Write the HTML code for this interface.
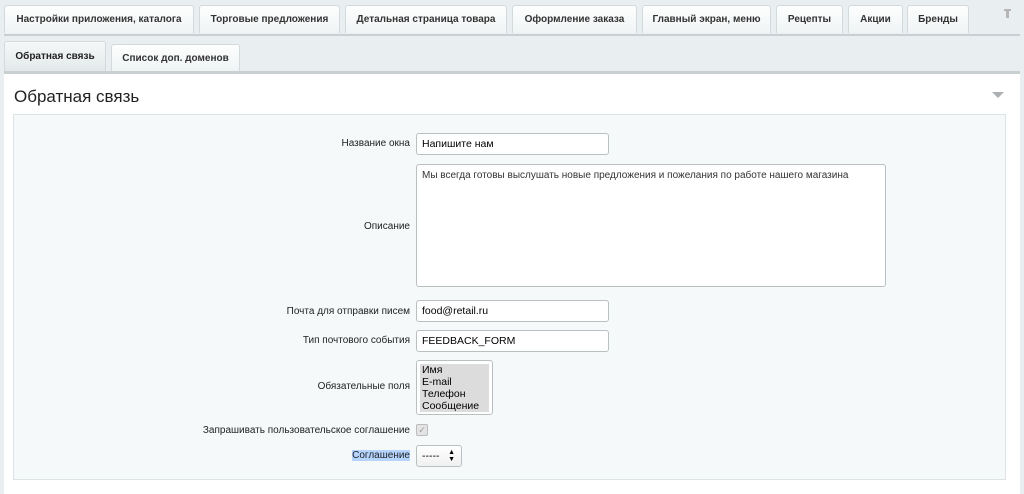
<!DOCTYPE html>
<html><head><meta charset="utf-8"><style>
body{margin:0;width:1024px;height:491px;background:#e9eef0;font-family:"Liberation Sans",sans-serif;position:relative;overflow:hidden;font-size:10px;color:#000}
.a{position:absolute}
.tab{position:absolute;top:5px;height:28px;border:1px solid #d3dadc;border-bottom:none;border-radius:3px 3px 0 0;background:linear-gradient(#fdfefe,#f0f4f5);font-weight:bold;font-size:10px;color:#333;text-align:center;line-height:28px;box-sizing:border-box;white-space:nowrap}
.lbl{position:absolute;right:614px;font-size:10px;color:#222;text-align:right;white-space:nowrap}
.inp{position:absolute;left:416px;background:#fff;border:1px solid #b9c0c2;border-radius:3px;box-sizing:border-box;font-size:10.5px;padding-left:5px;color:#000}
</style></head><body>
<div class="tab" style="left:4px;width:190px">Настройки приложения, каталога</div>
<div class="tab" style="left:199px;width:141px">Торговые предложения</div>
<div class="tab" style="left:345px;width:162px">Детальная страница товара</div>
<div class="tab" style="left:512px;width:125px">Оформление заказа</div>
<div class="tab" style="left:642px;width:129px">Главный экран, меню</div>
<div class="tab" style="left:776px;width:67px">Рецепты</div>
<div class="tab" style="left:848px;width:55px">Акции</div>
<div class="tab" style="left:907px;width:62px">Бренды</div>
<div class="a" style="left:1006px;top:9px;width:3px;height:9px;background:#b5b5b5"></div>
<div class="a" style="left:1004px;top:9px;width:7px;height:2px;background:#b5b5b5"></div>
<div class="a" style="left:4px;top:34px;width:1016px;height:2px;background:#c8d0d3"></div>
<div class="tab" style="left:4px;top:41px;width:102px;height:30px;line-height:30px;background:linear-gradient(#f6f8f8,#e3e9ea);color:#222">Обратная связь</div>
<div class="tab" style="left:111px;top:44px;width:129px;height:27px;line-height:27px">Список доп. доменов</div>
<div class="a" style="left:4px;top:71px;width:1016px;height:420px;background:#fff;border-top:3px solid #c9d0d2"></div>
<div class="a" style="left:14px;top:87px;font-size:17px;color:#222">Обратная связь</div>
<div class="a" style="left:992px;top:92px;width:0;height:0;border-left:6px solid transparent;border-right:6px solid transparent;border-top:6px solid #aab0b3"></div>
<div class="a" style="left:13px;top:114px;width:993px;height:366px;background:#f5f9f9;border:1px solid #dce4e5;box-sizing:border-box"></div>
<div class="lbl" style="top:138px">Название окна</div>
<div class="inp" style="top:133px;width:193px;height:22px;line-height:20px">Напишите нам</div>
<div class="lbl" style="top:221px">Описание</div>
<div class="inp" style="top:164px;width:470px;height:123px;padding-top:4px;line-height:13px;color:#333;font-size:10px;white-space:nowrap">Мы всегда готовы выслушать новые предложения и пожелания по работе нашего магазина</div>
<div class="lbl" style="top:306px">Почта для отправки писем</div>
<div class="inp" style="top:300px;width:193px;height:22px;line-height:20px">food@retail.ru</div>
<div class="lbl" style="top:335px">Тип почтового события</div>
<div class="inp" style="top:330px;width:193px;height:22px;line-height:20px">FEEDBACK_FORM</div>
<div class="lbl" style="top:381px">Обязательные поля</div>
<div class="inp" style="top:360px;width:77px;height:55px;padding:3px;font-size:10.5px;line-height:12px"><div style="background:#dcdcdc;padding-left:2px">Имя<br>E-mail<br>Телефон<br>Сообщение</div></div>
<div class="lbl" style="top:425px">Запрашивать пользовательское соглашение</div>
<div class="a" style="left:416px;top:424px;width:12px;height:12px;border:1px solid #bbb;border-radius:2px;background:#e4e4e4;box-sizing:border-box;font-size:9px;color:#999;line-height:10px;text-align:center">✓</div>
<div class="lbl" style="top:450px;background:#b5d5ff">Соглашение</div>
<div class="inp" style="top:445px;width:46px;height:22px;line-height:20px;background:linear-gradient(#fff,#f0f0f0)">----- <span style="font-size:7px;position:absolute;right:6px;top:3px;line-height:7px">▲<br>▼</span></div>
</body></html>
